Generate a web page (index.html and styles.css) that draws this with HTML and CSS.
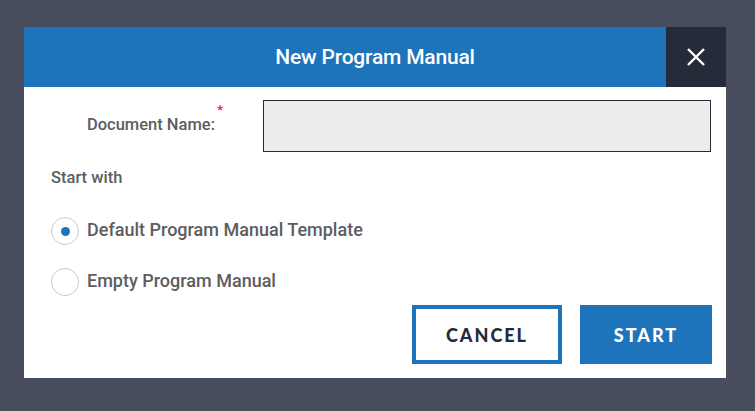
FILE: index.html
```html
<!DOCTYPE html>
<html lang="en">

<head>
    <meta charset="UTF-8">
    <meta name="viewport" content="width=device-width, initial-scale=1.0">
    <title>New Program Manual</title>
    <link rel="stylesheet" href="styles.css">
</head>

<body>
    <div class="dialog">
        <header class="dialog-header">
            <h1 class="dialog-title">New Program Manual</h1>
            <button class="dialog-close" aria-label="Close">
                <svg width="20" height="20" viewBox="0 0 20 20">
                    <path d="M2 2 L18 18 M18 2 L2 18" stroke="#fff" stroke-width="2.4" fill="none" />
                </svg>
            </button>
        </header>
        <div class="dialog-body">
            <div class="field-row">
                <label class="field-label" for="doc-name">Document Name:<span class="required">*</span></label>
                <input class="field-input" id="doc-name" type="text">
            </div>
            <p class="start-with">Start with</p>
            <ul class="radio-list">
                <li class="radio-item">
                    <span class="radio checked"></span>
                    <span class="radio-text">Default Program Manual Template</span>
                </li>
                <li class="radio-item">
                    <span class="radio"></span>
                    <span class="radio-text">Empty Program Manual</span>
                </li>
            </ul>
            <div class="actions">
                <button class="btn btn-cancel">CANCEL</button>
                <button class="btn btn-start">START</button>
            </div>
        </div>
    </div>
</body>

</html>
```

FILE: styles.css
```css
:root {
    --page-background: #474d5c;
    --blue: #1e74bb;
    --dark: #262b3a;
    --text-color: #5d5d60;
}

* {
    margin: 0;
    padding: 0;
    box-sizing: border-box;
}

body {
    background-color: var(--page-background);
    font-family: Roboto, "Noto Sans", sans-serif;
    color: var(--text-color);
    padding: 27px 0 0 24px;
    min-height: 100vh;
}

.dialog {
    width: 702px;
    background: #fff;
}

.dialog-header {
    display: flex;
    height: 60px;
    background-color: var(--blue);
}

.dialog-title {
    flex: 1;
    padding-left: 60px;
    text-align: center;
    color: #fff;
    font-size: 21px;
    font-weight: 500;
    line-height: 60px;
    letter-spacing: -0.2px;
}

.dialog-close {
    width: 60px;
    height: 60px;
    border: none;
    background-color: var(--dark);
    display: flex;
    align-items: center;
    justify-content: center;
    cursor: pointer;
}

.dialog-body {
    padding: 13px 14px 14px 27px;
    display: flex;
    flex-direction: column;
}

.field-row {
    display: flex;
    align-items: center;
}

.field-label {
    width: 212px;
    padding-right: 48px;
    padding-bottom: 4px;
    text-align: right;
    font-size: 16.5px;
    font-weight: 500;
    position: relative;
}

.required {
    color: #e8141c;
    font-size: 13px;
    position: absolute;
    right: 40px;
    top: -13px;
}

.field-input {
    flex: 1;
    height: 52px;
    margin-right: 1px;
    border: 1px solid var(--dark);
    background-color: #ededed;
}

.start-with {
    margin-top: 16px;
    font-size: 16.5px;
    font-weight: 500;
    line-height: 20px;
}

.radio-list {
    list-style: none;
    margin-top: 29px;
    display: flex;
    flex-direction: column;
    gap: 23px;
}

.radio-item {
    display: flex;
    align-items: center;
    gap: 8px;
}

.radio {
    width: 28px;
    height: 28px;
    border: 1px solid #c9c9c9;
    border-radius: 50%;
    display: flex;
    align-items: center;
    justify-content: center;
}

.radio.checked::after {
    content: "";
    width: 9px;
    height: 9px;
    border-radius: 50%;
    background-color: var(--blue);
}

.radio-text {
    font-size: 18px;
    font-weight: 500;
    line-height: 24px;
    margin-top: -3px;
}

.actions {
    margin-top: 9px;
    display: flex;
    justify-content: flex-end;
    gap: 18px;
}

.btn {
    height: 59px;
    font-family: Lato, "Open Sans", sans-serif;
    font-size: 18px;
    font-weight: 900;
    letter-spacing: 2px;
    cursor: pointer;
}

.btn-cancel {
    width: 150px;
    border: 4px solid var(--blue);
    background: #fff;
    color: var(--dark);
}

.btn-start {
    width: 132px;
    border: none;
    background-color: var(--blue);
    color: #fff;
}
```
